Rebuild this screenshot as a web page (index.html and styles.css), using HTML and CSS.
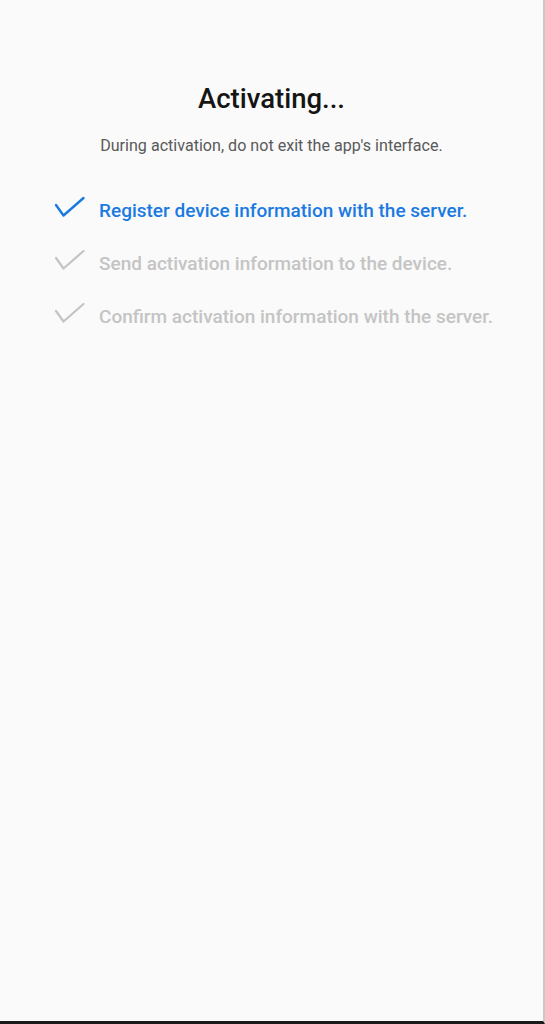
FILE: index.html
```html
<!DOCTYPE html>
<html>
<head>
<meta charset="utf-8">
<link rel="stylesheet" href="styles.css">
</head>
<body>
<div class="screen">
  <h1 class="title">Activating...</h1>
  <p class="subtitle">During activation, do not exit the app's interface.</p>
  <ul class="steps">
    <li class="step done">
      <svg class="check" viewBox="0 0 32 22" width="32" height="22"><path d="M2 6 L9.5 16.5 L29.5 -1" fill="none" stroke="currentColor" stroke-width="2.4" stroke-linecap="round" stroke-linejoin="round"/></svg>
      <span>Register device information with the server.</span>
    </li>
    <li class="step">
      <svg class="check" viewBox="0 0 32 22" width="32" height="22"><path d="M2 6 L9.5 16.5 L29.5 -1" fill="none" stroke="currentColor" stroke-width="2.2" stroke-linecap="round" stroke-linejoin="round"/></svg>
      <span>Send activation information to the device.</span>
    </li>
    <li class="step">
      <svg class="check" viewBox="0 0 32 22" width="32" height="22"><path d="M2 6 L9.5 16.5 L29.5 -1" fill="none" stroke="currentColor" stroke-width="2.2" stroke-linecap="round" stroke-linejoin="round"/></svg>
      <span>Confirm activation information with the server.</span>
    </li>
  </ul>
</div>
</body>
</html>
```
FILE: styles.css
```css
html, body {
  margin: 0;
  padding: 0;
  background: #fafafa;
}
.screen {
  box-sizing: border-box;
  width: 545px;
  height: 1024px;
  background: #fafafa;
  border-right: 2px solid #c8c8c8;
  border-bottom: 3px solid #1a1a1a;
  font-family: Roboto, "Liberation Sans", sans-serif;
  padding-top: 83px;
}
.title {
  margin: 0;
  text-align: center;
  font-size: 27.5px;
  font-weight: 500;
  line-height: 32px;
  color: #151515;
}
.subtitle {
  margin: 21px 0 0;
  text-align: center;
  font-size: 16.1px;
  line-height: 20px;
  color: #595959;
}
.steps {
  list-style: none;
  margin: 43px 0 0;
  padding: 0 0 0 54px;
  display: flex;
  flex-direction: column;
  gap: 31px;
}
.step {
  display: flex;
  align-items: center;
  gap: 13px;
  height: 22px;
  font-size: 19px;
  font-weight: 500;
  color: #c4c4c4;
}
.step .check {
  color: #c4c4c4;
  flex: none;
  overflow: visible;
}
.step.done, .step.done .check {
  color: #1a7ae2;
}
```
